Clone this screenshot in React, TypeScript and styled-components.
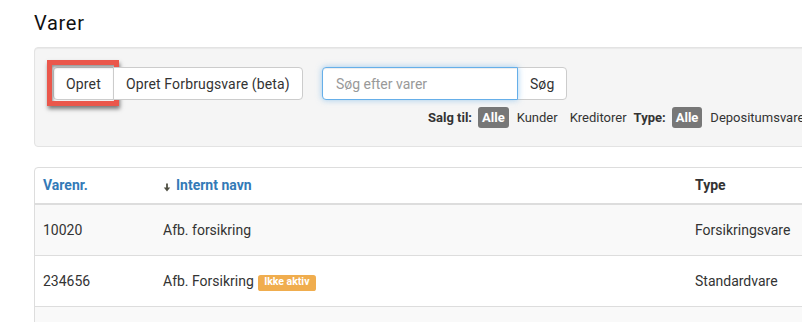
import React from 'react';
import styled, { createGlobalStyle } from 'styled-components';

const GlobalStyle = createGlobalStyle`
  html, body {
    margin: 0;
    padding: 0;
    overflow: hidden;
    background: #fff;
  }
  body {
    font-family: Roboto, "Liberation Sans", Arial, sans-serif;
    font-size: 14px;
    line-height: 20px;
    color: #333;
  }
  * { box-sizing: border-box; }
`;

const Page = styled.div`
  width: 1100px;
  padding: 11px 0 0 34px;
`;

const Title = styled.h1`
  margin: 0 0 12px;
  font-size: 20px;
  line-height: 24px;
  font-weight: 400;
  letter-spacing: 0.7px;
  color: #111;
`;

const Well = styled.div`
  width: 1000px;
  background: #f5f5f5;
  border: 1px solid #e3e3e3;
  border-radius: 4px;
  box-shadow: inset 0 1px 1px rgba(0, 0, 0, 0.05);
  padding: 19px 18px 18px;
`;

const Toolbar = styled.div`
  display: flex;
  align-items: center;
`;

const ButtonGroup = styled.div`
  display: flex;
`;

const Button = styled.button<{ $pos?: 'left' | 'right' | 'single' }>`
  position: relative;
  height: 33px;
  padding: 6px 12px;
  font-family: inherit;
  font-size: 14px;
  line-height: 20px;
  letter-spacing: 0.15px;
  color: #333;
  background: #fff;
  border: 1px solid #ccc;
  border-radius: ${(p) =>
    p.$pos === 'left' ? '4px 0 0 4px' : p.$pos === 'right' ? '0 4px 4px 0' : '4px'};
  margin-left: ${(p) => (p.$pos === 'right' ? '-1px' : '0')};
  cursor: pointer;
`;

const Highlight = styled.span`
  position: absolute;
  left: -7px;
  right: -6px;
  top: -8px;
  bottom: -7px;
  border: 5px solid #ea574b;
  box-shadow: 1px 3px 4px rgba(0, 0, 0, 0.5), inset 1px 2px 3px rgba(0, 0, 0, 0.4);
  pointer-events: none;
`;

const SearchGroup = styled.div`
  display: flex;
  margin-left: 19px;
`;

const SearchInput = styled.input`
  width: 196px;
  height: 33px;
  padding: 6px 13px;
  font-family: inherit;
  font-size: 14px;
  color: #555;
  background: #fff;
  border: 1px solid #66afe9;
  border-radius: 4px 0 0 4px;
  outline: none;
  box-shadow: inset 0 1px 1px rgba(0, 0, 0, 0.075), 0 0 6px rgba(102, 175, 233, 0.6);
  position: relative;
  z-index: 1;

  &::placeholder {
    color: #999;
  }
`;

const FilterRow = styled.div`
  display: flex;
  align-items: center;
  margin: 7px 0 0 375px;
  font-size: 13px;
  line-height: 15px;
  white-space: nowrap;
`;

const FilterLabel = styled.span`
  font-weight: 700;
  margin: 0 2px 0 3px;
  color: #333;

  &:first-child {
    margin-left: 0;
  }
`;

const FilterOption = styled.a<{ $active?: boolean }>`
  margin-left: 4px;
  padding: 3px 4px;
  border-radius: 3px;
  color: ${(p) => (p.$active ? '#fff' : '#333')};
  background: ${(p) => (p.$active ? '#777' : 'transparent')};
  font-weight: ${(p) => (p.$active ? 700 : 400)};
  text-decoration: none;
  cursor: pointer;
`;

const Table = styled.table`
  width: 1000px;
  margin-top: 20px;
  table-layout: fixed;
  border-collapse: separate;
  border-spacing: 0;
  border: 1px solid #ddd;
  border-radius: 4px;
`;

const Th = styled.th<{ $link?: boolean }>`
  text-align: left;
  padding: 7px 8px 8px;
  font-weight: 700;
  color: ${(p) => (p.$link ? '#337ab7' : '#333')};
  border-bottom: 2px solid #ddd;
  white-space: nowrap;
`;

const Tr = styled.tr<{ $striped?: boolean }>`
  background: ${(p) => (p.$striped ? '#f9f9f9' : '#fff')};
`;

const Td = styled.td<{ $first?: boolean }>`
  padding: 15px 8px;
  border-top: ${(p) => (p.$first ? '0' : '1px solid #ddd')};
  white-space: nowrap;
`;

const EmptyTd = styled.td`
  height: 20px;
  border-top: 1px solid #ddd;
`;

const SortArrow = styled.svg`
  width: 8px;
  height: 9px;
  margin: 0 5px -2px 0;
  vertical-align: middle;
`;

const StatusLabel = styled.span`
  display: inline-block;
  margin-left: 4px;
  padding: 0.2em 0.6em 0.3em;
  font-size: 10.5px;
  line-height: 1;
  font-weight: 700;
  color: #fff;
  background: #f0ad4e;
  border-radius: 0.25em;
  vertical-align: 1px;
`;

type Item = { nr: string; name: string; type: string; inactive?: boolean };

const items: Item[] = [
  { nr: '10020', name: 'Afb. forsikring', type: 'Forsikringsvare' },
  { nr: '234656', name: 'Afb. Forsikring', type: 'Standardvare', inactive: true },
];

export default function App() {
  return (
    <>
      <GlobalStyle />
      <Page>
        <Title>Varer</Title>
        <Well>
          <Toolbar>
            <ButtonGroup>
              <Button $pos="left">
                Opret
                <Highlight />
              </Button>
              <Button $pos="right">Opret Forbrugsvare (beta)</Button>
            </ButtonGroup>
            <SearchGroup>
              <SearchInput placeholder="Søg efter varer" />
              <Button $pos="right">Søg</Button>
            </SearchGroup>
          </Toolbar>
          <FilterRow>
            <FilterLabel>Salg til:</FilterLabel>
            <FilterOption $active>Alle</FilterOption>
            <FilterOption>Kunder</FilterOption>
            <FilterOption>Kreditorer</FilterOption>
            <FilterLabel>Type:</FilterLabel>
            <FilterOption $active>Alle</FilterOption>
            <FilterOption>Depositumsvare</FilterOption>
          </FilterRow>
        </Well>
        <Table>
          <colgroup>
            <col style={{ width: 120 }} />
            <col style={{ width: 532 }} />
            <col />
          </colgroup>
          <thead>
            <tr>
              <Th $link>Varenr.</Th>
              <Th $link>
                <SortArrow viewBox="0 0 8 9">
                  <path d="M4 0.5 V5.5" stroke="#4f4f42" strokeWidth="1.8" />
                  <path d="M0.8 4.5 L4 8.5 L7.2 4.5 Z" fill="#4f4f42" />
                </SortArrow>
                Internt navn
              </Th>
              <Th>Type</Th>
            </tr>
          </thead>
          <tbody>
            {items.map((it, i) => (
              <Tr key={it.nr} $striped={i % 2 === 0}>
                <Td $first={i === 0}>{it.nr}</Td>
                <Td $first={i === 0}>
                  {it.name}
                  {it.inactive && <StatusLabel>Ikke aktiv</StatusLabel>}
                </Td>
                <Td $first={i === 0}>{it.type}</Td>
              </Tr>
            ))}
            <Tr $striped>
              <EmptyTd />
              <EmptyTd />
              <EmptyTd />
            </Tr>
          </tbody>
        </Table>
      </Page>
    </>
  );
}
